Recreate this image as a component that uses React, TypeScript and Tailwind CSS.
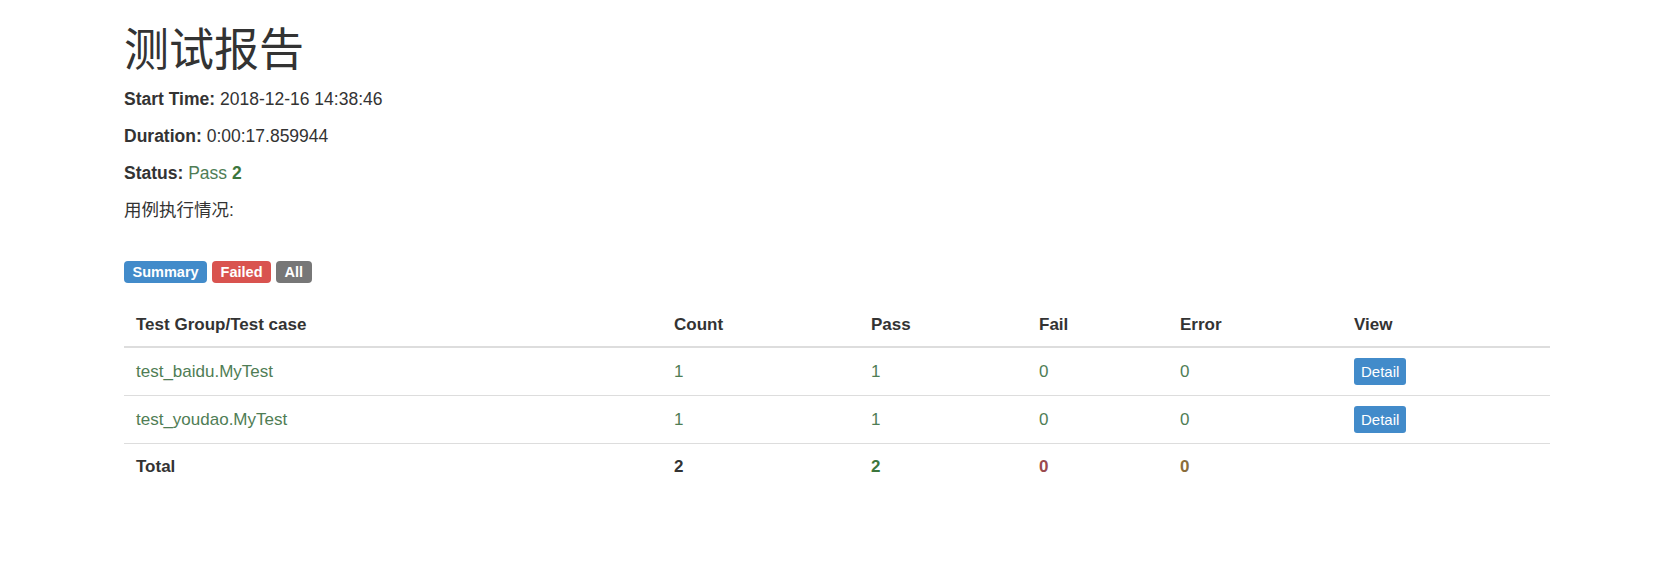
const rows = [
  { name: "test_baidu.MyTest", count: 1, pass: 1, fail: 0, error: 0 },
  { name: "test_youdao.MyTest", count: 1, pass: 1, fail: 0, error: 0 },
];

const cols = "grid grid-cols-[538px_197px_168px_141px_174px_208px]";

const App = () => {
  return (
    <div className="min-h-[583px] bg-white text-[#333] font-['Liberation_Sans','Noto_Sans_CJK_SC',sans-serif]">
      <div className="pl-[124px] pt-[20px] w-[1550px]">
        <h1 className="text-[45px] leading-[54px] font-normal font-['Noto_Sans_CJK_SC',sans-serif] mb-[13px]">测试报告</h1>

        <p className="text-[17.5px] leading-[25px] mb-[12px]">
          <b>Start Time:</b> 2018-12-16 14:38:46
        </p>
        <p className="text-[17.5px] leading-[25px] mb-[12px]">
          <b>Duration:</b> 0:00:17.859944
        </p>
        <p className="text-[17.5px] leading-[25px] mb-[12px]">
          <b>Status:</b> <span className="text-[#4f7d55]">Pass <b className="text-[#3c763d]">2</b></span>
        </p>
        <p className="text-[17.5px] leading-[25px] mb-[12px]">用例执行情况:</p>

        <div className="flex gap-[5px] mt-[38px]">
          <span className="h-[22px] px-[8.5px] rounded-[4px] bg-[#428bca] text-white font-bold text-[14.5px] leading-[22px]">Summary</span>
          <span className="h-[22px] px-[8.5px] rounded-[4px] bg-[#d9534f] text-white font-bold text-[14.5px] leading-[22px]">Failed</span>
          <span className="h-[22px] px-[8.5px] rounded-[4px] bg-[#777] text-white font-bold text-[14.5px] leading-[22px]">All</span>
        </div>

        <div className="mt-[17px] w-[1426px] text-[17px]">
          <div className={`${cols} h-[48px] pt-[4px] items-center font-bold border-b-2 border-[#ddd]`}>
            <div className="pl-[12px]">Test Group/Test case</div>
            <div className="pl-[12px]">Count</div>
            <div className="pl-[12px]">Pass</div>
            <div className="pl-[12px]">Fail</div>
            <div className="pl-[12px]">Error</div>
            <div className="pl-[12px]">View</div>
          </div>

          {rows.map((r) => (
            <div key={r.name} className={`${cols} h-[48px] items-center text-[#4f7d55] border-b border-[#ddd]`}>
              <div className="pl-[12px]">{r.name}</div>
              <div className="pl-[12px]">{r.count}</div>
              <div className="pl-[12px]">{r.pass}</div>
              <div className="pl-[12px]">{r.fail}</div>
              <div className="pl-[12px]">{r.error}</div>
              <div className="pl-[12px]">
                <span className="inline-block h-[27px] px-[7px] rounded-[3px] bg-[#428bca] text-white text-[15px] leading-[27px]">Detail</span>
              </div>
            </div>
          ))}

          <div className={`${cols} h-[46px] items-center font-bold`}>
            <div className="pl-[12px]">Total</div>
            <div className="pl-[12px]">2</div>
            <div className="pl-[12px] text-[#3c763d]">2</div>
            <div className="pl-[12px] text-[#9a4a4e]">0</div>
            <div className="pl-[12px] text-[#8a6d3b]">0</div>
            <div className="pl-[12px]"></div>
          </div>
        </div>
      </div>
    </div>
  );
};

export default App;
